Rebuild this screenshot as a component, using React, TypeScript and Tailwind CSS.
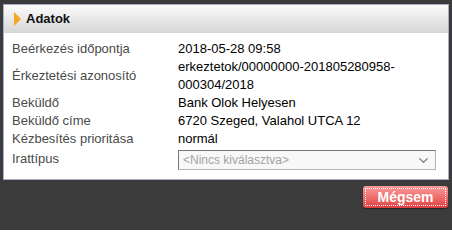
import { ChevronDown } from "lucide-react";

const rows: [string, string][] = [
  ["Beérkezés időpontja", "2018-05-28 09:58"],
  ["Érkeztetési azonosító", "erkeztetok/00000000-201805280958-000304/2018"],
  ["Beküldő", "Bank Olok Helyesen"],
  ["Beküldő címe", "6720 Szeged, Valahol UTCA 12"],
  ["Kézbesítés prioritása", "normál"],
];

export default function App() {
  return (
    <div
      className="flex h-[230px] w-[452px] flex-col bg-[#3b3b3b] pl-[3px] pr-[3px] pt-[4px] text-[13px] leading-[18px]"
      style={{ fontFamily: '"Liberation Sans", Arial, sans-serif' }}
    >
      <section className="border border-[#a4acc8] bg-white">
        <div className="flex h-[28px] items-center gap-[5px] bg-gradient-to-b from-[#fbfbfb] to-[#d6d6d6] pl-[10px]">
          <span className="h-0 w-0 border-y-[7px] border-l-[7px] border-y-transparent border-l-[#f5a623]" />
          <h2 className="font-bold text-[#111]">Adatok</h2>
        </div>
        <div className="grid grid-cols-[166px_258px] px-[8px] pb-[9px] pt-[7px]">
          {rows.map(([label, value]) => (
            <div key={label} className="contents">
              <p className="flex items-center text-[#4a4a4a]">{label}</p>
              <p className="flex items-center text-black">
                <span className="break-words">{value}</span>
              </p>
            </div>
          ))}
          <p className="flex items-center text-[#4a4a4a]">Irattípus</p>
          <div className="mt-[2px] flex h-[20px] items-center justify-between border border-[#b5b5b5] border-l-[#777] border-t-[#777] bg-[#f8f8f8] pl-[4px] pr-[4px] text-[12px] text-[#a3a3a3]">
            <span>&lt;Nincs kiválasztva&gt;</span>
            <ChevronDown className="h-[15px] w-[15px] text-[#777]" strokeWidth={2} />
          </div>
        </div>
      </section>
      <div className="mt-[6px] flex justify-end pr-[1px]">
        <button className="flex h-[22px] w-[85px] items-center justify-center rounded-[3px] bg-gradient-to-b from-[#fa9a9a] to-[#e03c40] p-[2px] shadow-[0_1px_1px_rgba(0,0,0,0.4)]">
          <span className="flex h-full w-full items-center justify-center border border-dotted border-white text-[14px] font-bold text-white">
            Mégsem
          </span>
        </button>
      </div>
    </div>
  );
}
